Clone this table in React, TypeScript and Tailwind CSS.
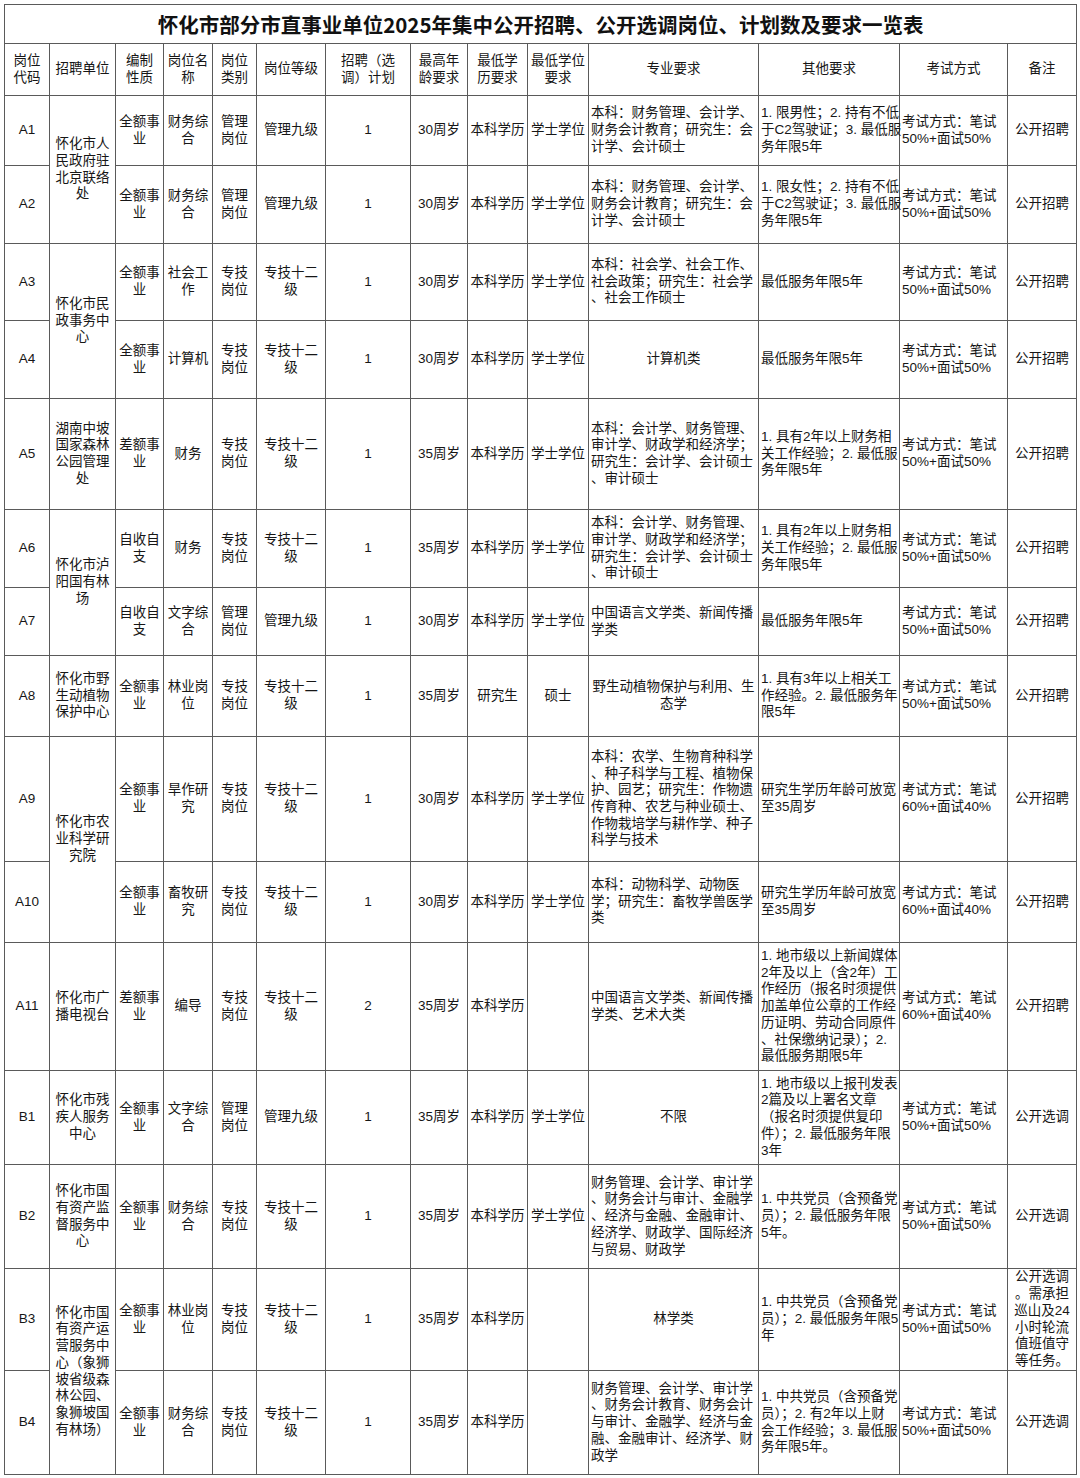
import React from 'react';

type Al = 'c' | 'l';
interface C {
  t: string[];
  a?: Al;
  rs?: number;
}
interface R {
  h: string;
  cells: C[];
}

const E55 = ['考试方式：笔试', '50%+面试50%'];
const E64 = ['考试方式：笔试', '60%+面试40%'];

const c = (t: string | string[], a: Al = 'c', rs?: number): C => ({
  t: Array.isArray(t) ? t : [t],
  a,
  rs,
});

const rows: R[] = [
  {
    h: 'h-[70px]',
    cells: [
      c('A1'),
      c(['怀化市人', '民政府驻', '北京联络', '处'], 'c', 2),
      c(['全额事', '业']),
      c(['财务综', '合']),
      c(['管理', '岗位']),
      c('管理九级'),
      c('1'),
      c('30周岁'),
      c('本科学历'),
      c('学士学位'),
      c(['本科：财务管理、会计学、', '财务会计教育；研究生：会', '计学、会计硕士'], 'l'),
      c(['1. 限男性；2. 持有不低', '于C2驾驶证；3. 最低服', '务年限5年'], 'l'),
      c(E55, 'l'),
      c('公开招聘'),
    ],
  },
  {
    h: 'h-[78px]',
    cells: [
      c('A2'),
      c(['全额事', '业']),
      c(['财务综', '合']),
      c(['管理', '岗位']),
      c('管理九级'),
      c('1'),
      c('30周岁'),
      c('本科学历'),
      c('学士学位'),
      c(['本科：财务管理、会计学、', '财务会计教育；研究生：会', '计学、会计硕士'], 'l'),
      c(['1. 限女性；2. 持有不低', '于C2驾驶证；3. 最低服', '务年限5年'], 'l'),
      c(E55, 'l'),
      c('公开招聘'),
    ],
  },
  {
    h: 'h-[77px]',
    cells: [
      c('A3'),
      c(['怀化市民', '政事务中', '心'], 'c', 2),
      c(['全额事', '业']),
      c(['社会工', '作']),
      c(['专技', '岗位']),
      c(['专技十二', '级']),
      c('1'),
      c('30周岁'),
      c('本科学历'),
      c('学士学位'),
      c(['本科：社会学、社会工作、', '社会政策；研究生：社会学', '、社会工作硕士'], 'l'),
      c(['最低服务年限5年'], 'l'),
      c(E55, 'l'),
      c('公开招聘'),
    ],
  },
  {
    h: 'h-[78px]',
    cells: [
      c('A4'),
      c(['全额事', '业']),
      c('计算机'),
      c(['专技', '岗位']),
      c(['专技十二', '级']),
      c('1'),
      c('30周岁'),
      c('本科学历'),
      c('学士学位'),
      c('计算机类'),
      c(['最低服务年限5年'], 'l'),
      c(E55, 'l'),
      c('公开招聘'),
    ],
  },
  {
    h: 'h-[111px]',
    cells: [
      c('A5'),
      c(['湖南中坡', '国家森林', '公园管理', '处']),
      c(['差额事', '业']),
      c('财务'),
      c(['专技', '岗位']),
      c(['专技十二', '级']),
      c('1'),
      c('35周岁'),
      c('本科学历'),
      c('学士学位'),
      c(['本科：会计学、财务管理、', '审计学、财政学和经济学；', '研究生：会计学、会计硕士', '、审计硕士'], 'l'),
      c(['1. 具有2年以上财务相', '关工作经验；2. 最低服', '务年限5年'], 'l'),
      c(E55, 'l'),
      c('公开招聘'),
    ],
  },
  {
    h: 'h-[78px]',
    cells: [
      c('A6'),
      c(['怀化市泸', '阳国有林', '场'], 'c', 2),
      c(['自收自', '支']),
      c('财务'),
      c(['专技', '岗位']),
      c(['专技十二', '级']),
      c('1'),
      c('35周岁'),
      c('本科学历'),
      c('学士学位'),
      c(['本科：会计学、财务管理、', '审计学、财政学和经济学；', '研究生：会计学、会计硕士', '、审计硕士'], 'l'),
      c(['1. 具有2年以上财务相', '关工作经验；2. 最低服', '务年限5年'], 'l'),
      c(E55, 'l'),
      c('公开招聘'),
    ],
  },
  {
    h: 'h-[68px]',
    cells: [
      c('A7'),
      c(['自收自', '支']),
      c(['文字综', '合']),
      c(['管理', '岗位']),
      c('管理九级'),
      c('1'),
      c('30周岁'),
      c('本科学历'),
      c('学士学位'),
      c(['中国语言文学类、新闻传播', '学类'], 'l'),
      c(['最低服务年限5年'], 'l'),
      c(E55, 'l'),
      c('公开招聘'),
    ],
  },
  {
    h: 'h-[81px]',
    cells: [
      c('A8'),
      c(['怀化市野', '生动植物', '保护中心']),
      c(['全额事', '业']),
      c(['林业岗', '位']),
      c(['专技', '岗位']),
      c(['专技十二', '级']),
      c('1'),
      c('35周岁'),
      c('研究生'),
      c('硕士'),
      c(['野生动植物保护与利用、生', '态学']),
      c(['1. 具有3年以上相关工', '作经验。2. 最低服务年', '限5年'], 'l'),
      c(E55, 'l'),
      c('公开招聘'),
    ],
  },
  {
    h: 'h-[125px]',
    cells: [
      c('A9'),
      c(['怀化市农', '业科学研', '究院'], 'c', 2),
      c(['全额事', '业']),
      c(['旱作研', '究']),
      c(['专技', '岗位']),
      c(['专技十二', '级']),
      c('1'),
      c('30周岁'),
      c('本科学历'),
      c('学士学位'),
      c(
        [
          '本科：农学、生物育种科学',
          '、种子科学与工程、植物保',
          '护、园艺；研究生：作物遗',
          '传育种、农艺与种业硕士、',
          '作物栽培学与耕作学、种子',
          '科学与技术',
        ],
        'l'
      ),
      c(['研究生学历年龄可放宽', '至35周岁'], 'l'),
      c(E64, 'l'),
      c('公开招聘'),
    ],
  },
  {
    h: 'h-[81px]',
    cells: [
      c('A10'),
      c(['全额事', '业']),
      c(['畜牧研', '究']),
      c(['专技', '岗位']),
      c(['专技十二', '级']),
      c('1'),
      c('30周岁'),
      c('本科学历'),
      c('学士学位'),
      c(['本科：动物科学、动物医', '学；研究生：畜牧学兽医学', '类'], 'l'),
      c(['研究生学历年龄可放宽', '至35周岁'], 'l'),
      c(E64, 'l'),
      c('公开招聘'),
    ],
  },
  {
    h: 'h-[128px]',
    cells: [
      c('A11'),
      c(['怀化市广', '播电视台']),
      c(['差额事', '业']),
      c('编导'),
      c(['专技', '岗位']),
      c(['专技十二', '级']),
      c('2'),
      c('35周岁'),
      c('本科学历'),
      c(''),
      c(['中国语言文学类、新闻传播', '学类、艺术大类'], 'l'),
      c(
        [
          '1. 地市级以上新闻媒体',
          '2年及以上（含2年）工',
          '作经历（报名时须提供',
          '加盖单位公章的工作经',
          '历证明、劳动合同原件',
          '、社保缴纳记录）；2.',
          '最低服务期限5年',
        ],
        'l'
      ),
      c(E64, 'l'),
      c('公开招聘'),
    ],
  },
  {
    h: 'h-[94px]',
    cells: [
      c('B1'),
      c(['怀化市残', '疾人服务', '中心']),
      c(['全额事', '业']),
      c(['文字综', '合']),
      c(['管理', '岗位']),
      c('管理九级'),
      c('1'),
      c('35周岁'),
      c('本科学历'),
      c('学士学位'),
      c('不限'),
      c(['1. 地市级以上报刊发表', '2篇及以上署名文章', '（报名时须提供复印', '件）；2. 最低服务年限', '3年'], 'l'),
      c(E55, 'l'),
      c('公开选调'),
    ],
  },
  {
    h: 'h-[104px]',
    cells: [
      c('B2'),
      c(['怀化市国', '有资产监', '督服务中', '心']),
      c(['全额事', '业']),
      c(['财务综', '合']),
      c(['专技', '岗位']),
      c(['专技十二', '级']),
      c('1'),
      c('35周岁'),
      c('本科学历'),
      c('学士学位'),
      c(
        [
          '财务管理、会计学、审计学',
          '、财务会计与审计、金融学',
          '、经济与金融、金融审计、',
          '经济学、财政学、国际经济',
          '与贸易、财政学',
        ],
        'l'
      ),
      c(['1. 中共党员（含预备党', '员）；2. 最低服务年限', '5年。'], 'l'),
      c(E55, 'l'),
      c('公开选调'),
    ],
  },
  {
    h: 'h-[102px]',
    cells: [
      c('B3'),
      c(['怀化市国', '有资产运', '营服务中', '心（象狮', '坡省级森', '林公园、', '象狮坡国', '有林场）'], 'c', 2),
      c(['全额事', '业']),
      c(['林业岗', '位']),
      c(['专技', '岗位']),
      c(['专技十二', '级']),
      c('1'),
      c('35周岁'),
      c('本科学历'),
      c(''),
      c('林学类'),
      c(['1. 中共党员（含预备党', '员）；2. 最低服务年限5', '年'], 'l'),
      c(E55, 'l'),
      c(['公开选调', '。需承担', '巡山及24', '小时轮流', '值班值守', '等任务。']),
    ],
  },
  {
    h: 'h-[104px]',
    cells: [
      c('B4'),
      c(['全额事', '业']),
      c(['财务综', '合']),
      c(['专技', '岗位']),
      c(['专技十二', '级']),
      c('1'),
      c('35周岁'),
      c('本科学历'),
      c(''),
      c(
        [
          '财务管理、会计学、审计学',
          '、财务会计教育、财务会计',
          '与审计、金融学、经济与金',
          '融、金融审计、经济学、财',
          '政学',
        ],
        'l'
      ),
      c(['1. 中共党员（含预备党', '员）；2. 有2年以上财', '会工作经验；3. 最低服', '务年限5年。'], 'l'),
      c(E55, 'l'),
      c('公开选调'),
    ],
  },
];

const headers: string[][] = [
  ['岗位', '代码'],
  ['招聘单位'],
  ['编制', '性质'],
  ['岗位名', '称'],
  ['岗位', '类别'],
  ['岗位等级'],
  ['招聘（选', '调）计划'],
  ['最高年', '龄要求'],
  ['最低学', '历要求'],
  ['最低学位', '要求'],
  ['专业要求'],
  ['其他要求'],
  ['考试方式'],
  ['备注'],
];

const widths = [
  'w-[45px]',
  'w-[66px]',
  'w-[48px]',
  'w-[49px]',
  'w-[44px]',
  'w-[69px]',
  'w-[85px]',
  'w-[57px]',
  'w-[60px]',
  'w-[61px]',
  'w-[170px]',
  'w-[141px]',
  'w-[108px]',
  'w-[69px]',
];

function Cell({ cell }: { cell: C }) {
  return (
    <td
      rowSpan={cell.rs}
      className={
        cell.a === 'l'
          ? 'border border-[#5a5a5a] px-[2px] py-0 align-middle text-left'
          : 'border border-[#5a5a5a] px-[2px] py-0 align-middle text-center'
      }
    >
      {cell.t.map((l, i) => (
        <div key={i} className="whitespace-nowrap">
          {l}
        </div>
      ))}
    </td>
  );
}

export default function App() {
  return (
    <div className="w-[1080px] h-[1478px] bg-white p-[4px] font-['Liberation_Sans','Noto_Sans_CJK_SC',sans-serif] text-[#161616]">
      <table className="table-fixed border-collapse w-[1072px] text-[13.5px] leading-[16.7px]">
        <colgroup>
          {widths.map((w, i) => (
            <col key={i} className={w} />
          ))}
        </colgroup>
        <tbody>
          <tr className="h-[39px]">
            <td
              colSpan={14}
              className="border border-[#5a5a5a] text-center align-middle font-['Noto_Sans_CJK_SC',sans-serif] font-bold text-[20.5px] leading-[24px] text-[#111]"
            >
              怀化市部分市直事业单位2025年集中公开招聘、公开选调岗位、计划数及要求一览表
            </td>
          </tr>
          <tr className="h-[52px]">
            {headers.map((h, i) => (
              <Cell key={i} cell={{ t: h }} />
            ))}
          </tr>
          {rows.map((r, i) => (
            <tr key={i} className={r.h}>
              {r.cells.map((cell, j) => (
                <Cell key={j} cell={cell} />
              ))}
            </tr>
          ))}
        </tbody>
      </table>
    </div>
  );
}
